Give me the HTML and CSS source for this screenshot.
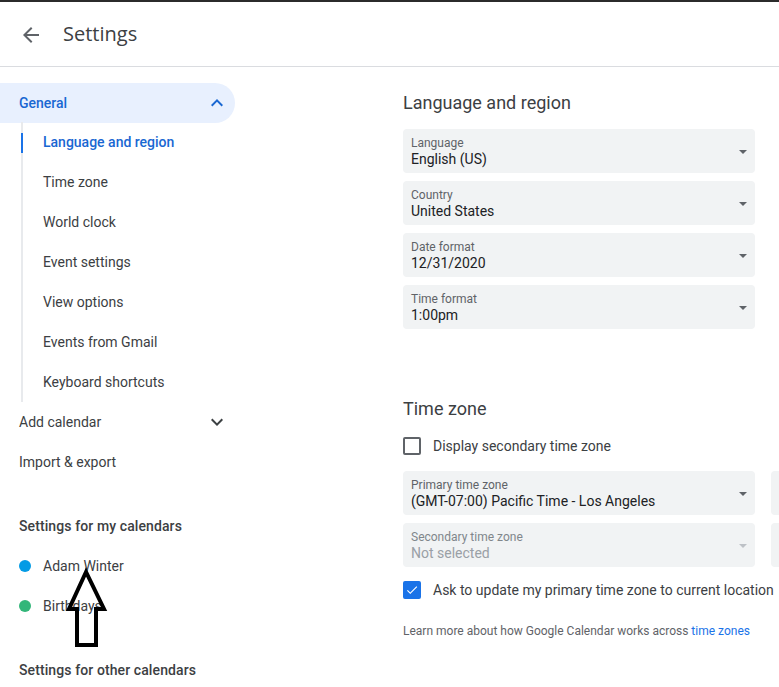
FILE: index.html
```html
<!DOCTYPE html>
<html lang="en">
<head>
<meta charset="utf-8">
<title>Settings</title>
<link rel="stylesheet" href="styles.css">
</head>
<body>
<div class="page">
  <header class="topbar">
    <span class="back">
      <svg viewBox="0 0 24 24" width="24" height="24"><path d="M20 11H7.83l5.59-5.59L12 4l-8 8 8 8 1.41-1.41L7.83 13H20v-2z" fill="#5f6368"/></svg>
    </span>
    <h1 class="title">Settings</h1>
  </header>
  <div class="body">
    <nav class="sidebar">
      <div class="nav-item nav-group">
        <span>General</span>
        <svg class="chev" viewBox="0 0 24 24" width="24" height="24"><path d="M7.41 15.41L12 10.83l4.59 4.58L18 14l-6-6-6 6z" fill="#1967d2"/></svg>
      </div>
      <ul class="sublist">
        <li class="sub active">Language and region</li>
        <li class="sub">Time zone</li>
        <li class="sub">World clock</li>
        <li class="sub">Event settings</li>
        <li class="sub">View options</li>
        <li class="sub">Events from Gmail</li>
        <li class="sub">Keyboard shortcuts</li>
      </ul>
      <div class="nav-item">
        <span>Add calendar</span>
        <svg class="chev" viewBox="0 0 24 24" width="24" height="24"><path d="M7.41 8.59L12 13.17l4.59-4.58L18 10l-6 6-6-6z" fill="#3c4043"/></svg>
      </div>
      <div class="nav-item">Import &amp; export</div>
      <div class="nav-head">Settings for my calendars</div>
      <div class="cal"><span class="dot blue"></span>Adam Winter</div>
      <div class="cal"><span class="dot green"></span>Birthdays</div>
      <div class="nav-head">Settings for other calendars</div>
    </nav>
    <main class="main">
      <section class="section lang">
        <h2 class="heading">Language and region</h2>
        <div class="fields">
          <div class="field"><div class="ftext"><div class="label">Language</div><div class="value">English (US)</div></div><span class="tri"></span></div>
          <div class="field"><div class="ftext"><div class="label">Country</div><div class="value">United States</div></div><span class="tri"></span></div>
          <div class="field"><div class="ftext"><div class="label">Date format</div><div class="value">12/31/2020</div></div><span class="tri"></span></div>
          <div class="field"><div class="ftext"><div class="label">Time format</div><div class="value">1:00pm</div></div><span class="tri"></span></div>
        </div>
      </section>
      <section class="section tz">
        <h2 class="heading">Time zone</h2>
        <label class="check-row"><span class="box"></span><span>Display secondary time zone</span></label>
        <div class="tz-grid">
          <div class="field"><div class="ftext"><div class="label">Primary time zone</div><div class="value">(GMT-07:00) Pacific Time - Los Angeles</div></div><span class="tri"></span></div>
          <div class="field"></div>
          <div class="field disabled"><div class="ftext"><div class="label">Secondary time zone</div><div class="value">Not selected</div></div><span class="tri"></span></div>
          <div class="field disabled"></div>
        </div>
        <label class="check-row"><span class="box checked"><svg viewBox="0 0 24 24" width="16" height="16"><path d="M9 16.17L4.83 12l-1.42 1.41L9 19 21 7l-1.41-1.41z" fill="#fff"/></svg></span><span class="nowrap">Ask to update my primary time zone to current location</span></label>
        <p class="learn">Learn more about how Google Calendar works across <a href="#">time zones</a></p>
      </section>
    </main>
  </div>
  <svg class="annot" width="779" height="687" viewBox="0 0 779 687">
    <polygon points="86,572 69,609 77,609 77,645 96,645 96,609 104,609" fill="none" stroke="#000" stroke-width="4" stroke-linejoin="miter"/>
  </svg>
</div>
</body>
</html>
```
FILE: styles.css
```css
* { box-sizing: border-box; }
html, body { margin: 0; padding: 0; }
body {
  font-family: Roboto, "Liberation Sans", Arial, sans-serif;
  color: #3c4043;
  background: #fff;
  overflow: hidden;
  width: 779px;
  height: 687px;
}
.page {
  position: relative;
  width: 779px;
  height: 687px;
  border-top: 2px solid #2b2b2b;
  overflow: hidden;
}
.topbar {
  height: 65px;
  border-bottom: 1px solid #dadce0;
  display: flex;
  align-items: center;
  padding-left: 19px;
}
.back { width: 24px; height: 24px; display: flex; margin-top: 1px; }
.title {
  margin: 0 0 0 20px;
  font-family: "Open Sans", Roboto, sans-serif;
  font-weight: 400;
  font-size: 20px;
  color: #3c4043;
  line-height: 28px;
  margin-top: -1px;
}
.body { display: flex; }
.sidebar {
  width: 256px;
  flex: none;
  padding-top: 16px;
  font-size: 14px;
}
.nav-item {
  height: 40px;
  width: 235px;
  display: flex;
  align-items: center;
  justify-content: space-between;
  padding-left: 19px;
  padding-right: 6px;
  color: #3c4043;
}
.nav-group {
  background: #e8f0fe;
  border-radius: 0 20px 20px 0;
  color: #1967d2;
  font-weight: 500;
}
.chev { flex: none; }
.sublist {
  list-style: none;
  margin: -1px 0 0 21px;
  padding: 0;
  border-left: 2px solid #e8eaed;
}
.sub {
  height: 40px;
  line-height: 40px;
  padding-left: 20px;
  position: relative;
}
.sub.active { color: #1967d2; font-weight: 500; }
.sub.active::before {
  content: "";
  position: absolute;
  left: -2px;
  top: 11px;
  width: 2px;
  height: 20px;
  background: #1a73e8;
}
.nav-head {
  height: 40px;
  line-height: 40px;
  margin-top: 24px;
  padding-left: 19px;
  font-weight: 500;
  letter-spacing: 0.1px;
}
.cal {
  height: 40px;
  display: flex;
  align-items: center;
  padding-left: 19px;
}
.dot {
  width: 12px;
  height: 12px;
  border-radius: 50%;
  margin-right: 12px;
  flex: none;
}
.dot.blue { background: #039be5; }
.dot.green { background: #33b679; }
.main {
  flex: 1;
  padding-left: 147px;
  padding-top: 24px;
  min-width: 0;
}
.heading {
  margin: 0;
  font-family: Roboto, sans-serif;
  font-weight: 400;
  font-size: 18px;
  line-height: 24px;
  color: #3c4043;
}
.lang .heading { margin-bottom: 14px; }
.fields {
  display: flex;
  flex-direction: column;
  gap: 8px;
  width: 352px;
}
.field {
  height: 44px;
  background: #f1f3f4;
  border-radius: 4px;
  display: flex;
  align-items: center;
  justify-content: space-between;
  padding: 0 8px;
}
.label { font-size: 12px; line-height: 16px; color: #5f6368; }
.value { font-size: 14px; line-height: 16px; color: #202124; white-space: nowrap; }
.tri {
  width: 0; height: 0;
  border-left: 4.5px solid transparent;
  border-right: 4.5px solid transparent;
  border-top: 4.5px solid #5f6368;
  margin-top: 2px;
  flex: none;
}
.disabled .label { color: #80868b; }
.disabled .value { color: #9aa0a6; }
.disabled .tri { border-top-color: #bdc1c6; }
.tz { margin-top: 68px; }
.check-row {
  height: 40px;
  display: flex;
  align-items: center;
  font-size: 14px;
  color: #3c4043;
  white-space: nowrap;
}
.tz .heading + .check-row { margin-top: 5px; }
.box {
  width: 18px;
  height: 18px;
  border: 2px solid #5f6368;
  border-radius: 2px;
  margin-right: 12px;
  flex: none;
  display: flex;
  align-items: center;
  justify-content: center;
}
.box.checked { background: #1a73e8; border-color: #1a73e8; }
.tz-grid {
  display: grid;
  grid-template-columns: 352px 352px;
  column-gap: 16px;
  row-gap: 8px;
  margin-top: 5px;
  margin-bottom: 3px;
}
.learn {
  margin: 13px 0 0 0;
  font-size: 12px;
  line-height: 16px;
  color: #5f6368;
  white-space: nowrap;
}
.learn a { color: #1a73e8; text-decoration: none; }
.annot { position: absolute; left: 0; top: -2px; pointer-events: none; }
```
